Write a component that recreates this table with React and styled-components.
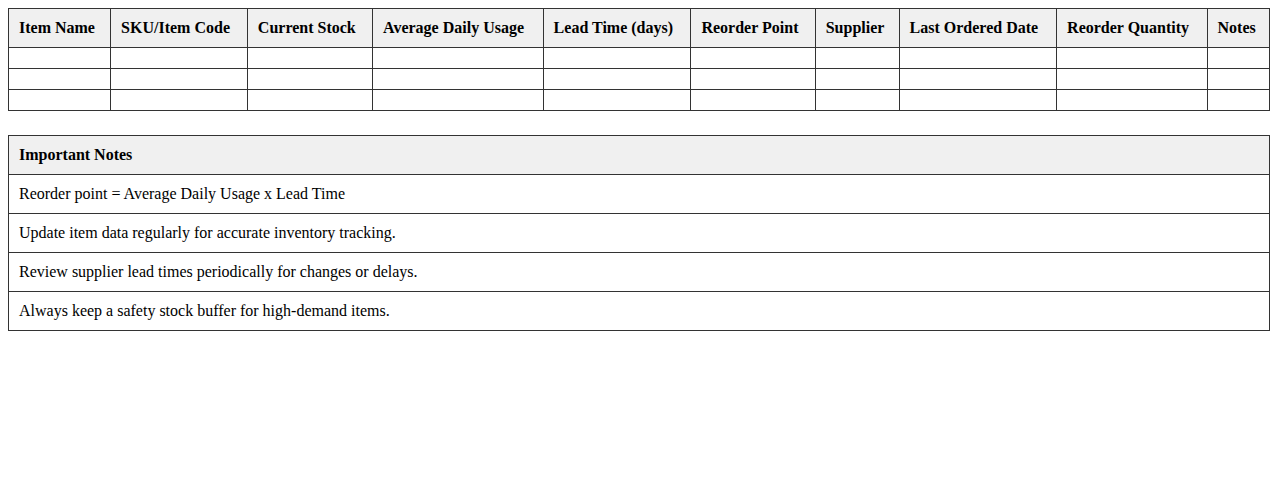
import React from "react";
import styled, { createGlobalStyle } from "styled-components";

const Global = createGlobalStyle`
  body {
    margin: 8px;
    font-family: "Liberation Serif", "Times New Roman", serif;
    font-size: 16px;
    color: #000;
    background: #fff;
  }
`;

const Table = styled.table`
  width: 100%;
  border-collapse: collapse;
  margin-bottom: 24px;
`;

const Th = styled.th`
  border: 1px solid #333;
  background: #f0f0f0;
  padding: 10px;
  text-align: left;
  font-weight: bold;
`;

const Td = styled.td`
  border: 1px solid #333;
  padding: 10px;
  text-align: left;
`;

const columns = [
  "Item Name",
  "SKU/Item Code",
  "Current Stock",
  "Average Daily Usage",
  "Lead Time (days)",
  "Reorder Point",
  "Supplier",
  "Last Ordered Date",
  "Reorder Quantity",
  "Notes",
];

const notes = [
  "Reorder point = Average Daily Usage x Lead Time",
  "Update item data regularly for accurate inventory tracking.",
  "Review supplier lead times periodically for changes or delays.",
  "Always keep a safety stock buffer for high-demand items.",
];

export default function App() {
  return (
    <>
      <Global />
      <Table>
        <thead>
          <tr>
            {columns.map((c) => (
              <Th key={c}>{c}</Th>
            ))}
          </tr>
        </thead>
        <tbody>
          {[0, 1, 2].map((r) => (
            <tr key={r}>
              {columns.map((c) => (
                <Td key={c}></Td>
              ))}
            </tr>
          ))}
        </tbody>
      </Table>
      <Table>
        <thead>
          <tr>
            <Th>Important Notes</Th>
          </tr>
        </thead>
        <tbody>
          {notes.map((n) => (
            <tr key={n}>
              <Td>{n}</Td>
            </tr>
          ))}
        </tbody>
      </Table>
    </>
  );
}
